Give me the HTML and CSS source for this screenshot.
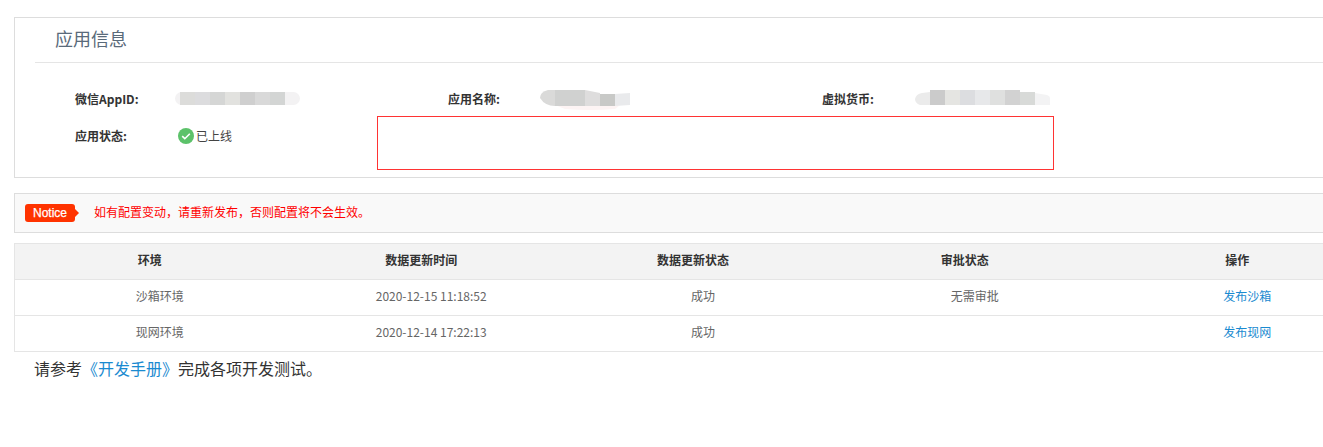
FILE: index.html
```html
<!DOCTYPE html>
<html lang="zh-CN">
<head>
<meta charset="utf-8">
<title>应用信息</title>
<link rel="stylesheet" href="styles.css">
</head>
<body>
<div class="page">
  <section class="panel">
    <h2 class="panel-title">应用信息</h2>
    <div class="info-grid">
      <div class="info-item">
        <span class="info-label">微信AppID:</span>
        <svg class="mosaic mosaic-a" width="125" height="20" viewBox="175 90 125 20" aria-hidden="true">
          <rect x="175" y="92" width="125" height="13" rx="6.5" fill="#f3f2f3"/>
          <rect x="180" y="92" width="15" height="13" fill="#dcdcda"/>
          <rect x="195" y="92" width="15" height="13" fill="#dcdcde"/>
          <rect x="210" y="92" width="15" height="13" fill="#d5d6d5"/>
          <rect x="225" y="92" width="15" height="13" fill="#e2e2df"/>
          <rect x="240" y="92" width="15" height="13" fill="#cfcfcf"/>
          <rect x="255" y="92" width="15" height="13" fill="#d9d9d9"/>
          <rect x="270" y="92" width="15" height="13" fill="#d3d5d4"/>
        </svg>
      </div>
      <div class="info-item">
        <span class="info-label">应用名称:</span>
        <svg class="mosaic mosaic-b" width="90" height="20" viewBox="540 90 90 20" aria-hidden="true">
          <path d="M555 105h65l-5 4q-25 2-50 0z" fill="#fdf4f4"/>
          <path d="M555 90v16q-10 0-15-8q0-6 8-8z" fill="#dadad9"/>
          <rect x="555" y="90" width="30" height="16" fill="#d0d1d0"/>
          <path d="M585 90l15 3v13h-15z" fill="#dedddd"/>
          <rect x="600" y="94" width="15" height="12" fill="#c8c9c7"/>
          <path d="M615 94l15-1v12l-15 1z" fill="#e9eaec"/>
        </svg>
      </div>
      <div class="info-item">
        <span class="info-label">虚拟货币:</span>
        <svg class="mosaic mosaic-c" width="135" height="20" viewBox="915 90 135 20" aria-hidden="true">
          <path d="M930 92v13h-10q-5-2-5-6q1-5 7-6z" fill="#ebebeb"/>
          <rect x="930" y="90" width="15" height="15" fill="#cbcbcb"/>
          <rect x="945" y="90" width="15" height="15" fill="#e5e5e2"/>
          <rect x="960" y="90" width="15" height="15" fill="#dcdde0"/>
          <rect x="975" y="90" width="15" height="15" fill="#e7e8ea"/>
          <rect x="990" y="90" width="15" height="15" fill="#dfe0df"/>
          <rect x="1005" y="90" width="15" height="15" fill="#d2d2d2"/>
          <path d="M1020 92h15v13h-15z" fill="#d8dad8"/>
          <path d="M1035 93l12 2q3 1 3 3v7h-15z" fill="#f3f3f4"/>
        </svg>
      </div>
      <div class="info-item">
        <span class="info-label">应用状态:</span>
        <span class="status">
          <svg class="status-icon" viewBox="0 0 16 16" aria-hidden="true"><circle cx="8" cy="8" r="8" fill="#5cc26a"/><path d="M4.2 8.2l2.6 2.5 5-5" fill="none" stroke="#fff" stroke-width="1.6"/></svg>已上线
        </span>
      </div>
    </div>
    <div class="redact-box"></div>
  </section>

  <section class="notice">
    <span class="notice-tag">Notice</span>
    <span class="notice-text">如有配置变动，请重新发布，否则配置将不会生效。</span>
  </section>

  <table class="env-table">
    <thead>
      <tr><th>环境</th><th>数据更新时间</th><th>数据更新状态</th><th>审批状态</th><th>操作</th></tr>
    </thead>
    <tbody>
      <tr><td>沙箱环境</td><td>2020-12-15 11:18:52</td><td>成功</td><td>无需审批</td><td><a href="#">发布沙箱</a></td></tr>
      <tr><td>现网环境</td><td>2020-12-14 17:22:13</td><td>成功</td><td></td><td><a href="#">发布现网</a></td></tr>
    </tbody>
  </table>

  <p class="hint">请参考<a href="#">《开发手册》</a>完成各项开发测试。</p>
</div>
</body>
</html>
```
FILE: styles.css
```css
html, body { margin: 0; padding: 0; overflow: hidden; background: #fff; }
body { font-family: "Noto Sans CJK SC", "Liberation Sans", sans-serif; color: #333; font-size: 12px; }
a { color: #1a8ad0; text-decoration: none; }
.page { width: 1376px; padding: 17px 0 0 14px; }

.panel { position: relative; height: 159px; border: 1px solid #ddd; }
.panel-title { margin: 0 0 0 20px; padding-left: 20px; height: 44px; line-height: 41px; font-size: 18px; font-weight: 400; color: #5a6a7a; border-bottom: 1px solid #e5e5e5; }
.info-grid { display: grid; grid-template-columns: 373px 374px 374px; grid-auto-rows: 37px; padding: 17px 0 0 60px; }
.info-item { display: flex; align-items: center; }
.info-label { width: 103px; font-weight: 700; color: #333; line-height: 37px; }
.mosaic { display: block; flex: none; align-self: flex-start; margin-top: 10px; }
.mosaic-a { margin-left: -3px; }
.mosaic-b { margin-left: -11px; }
.mosaic-c { margin-left: -10px; }
.status { display: flex; align-items: center; color: #444; }
.status-icon { width: 16px; height: 16px; margin-right: 2px; }
.redact-box { position: absolute; left: 362px; top: 98px; width: 675px; height: 52px; border: 1px solid #f33; }

.notice { display: flex; align-items: center; height: 38px; margin-top: 15px; background: #f9f9f9; border: 1px solid #ddd; }
.notice-tag { position: relative; margin-left: 10px; width: 50px; height: 18px; line-height: 18px; text-align: center; font-family: "Liberation Sans", sans-serif; font-size: 12px; -webkit-text-stroke: 0.25px #fff; color: #fff; background: #ff3300; border-radius: 3px; }
.notice-tag::after { content: ""; position: absolute; left: 100%; top: 5px; border-left: 4px solid #ff3300; border-top: 4px solid transparent; border-bottom: 4px solid transparent; }
.notice-text { margin: 0 0 4px 19px; color: #f00; }

.env-table { width: 1360px; margin-top: 10px; border-collapse: collapse; table-layout: fixed; border: 1px solid #e5e5e5; }
.env-table th { height: 35px; padding: 0 2px 0 0; vertical-align: top; line-height: 31px; font-weight: 700; text-align: center; color: #333; background: #f3f3f3; border-bottom: 1px solid #e5e5e5; }
.env-table td { height: 35px; padding: 0 2px 0 20px; vertical-align: top; line-height: 31px; text-align: center; color: #666; border-bottom: 1px solid #e5e5e5; }
.env-table th:last-child { padding-right: 0; }
.env-table td:last-child { padding-right: 0; }

.hint { margin: 5px 0 0 20px; font-size: 16px; line-height: 22px; color: #333; }
```
